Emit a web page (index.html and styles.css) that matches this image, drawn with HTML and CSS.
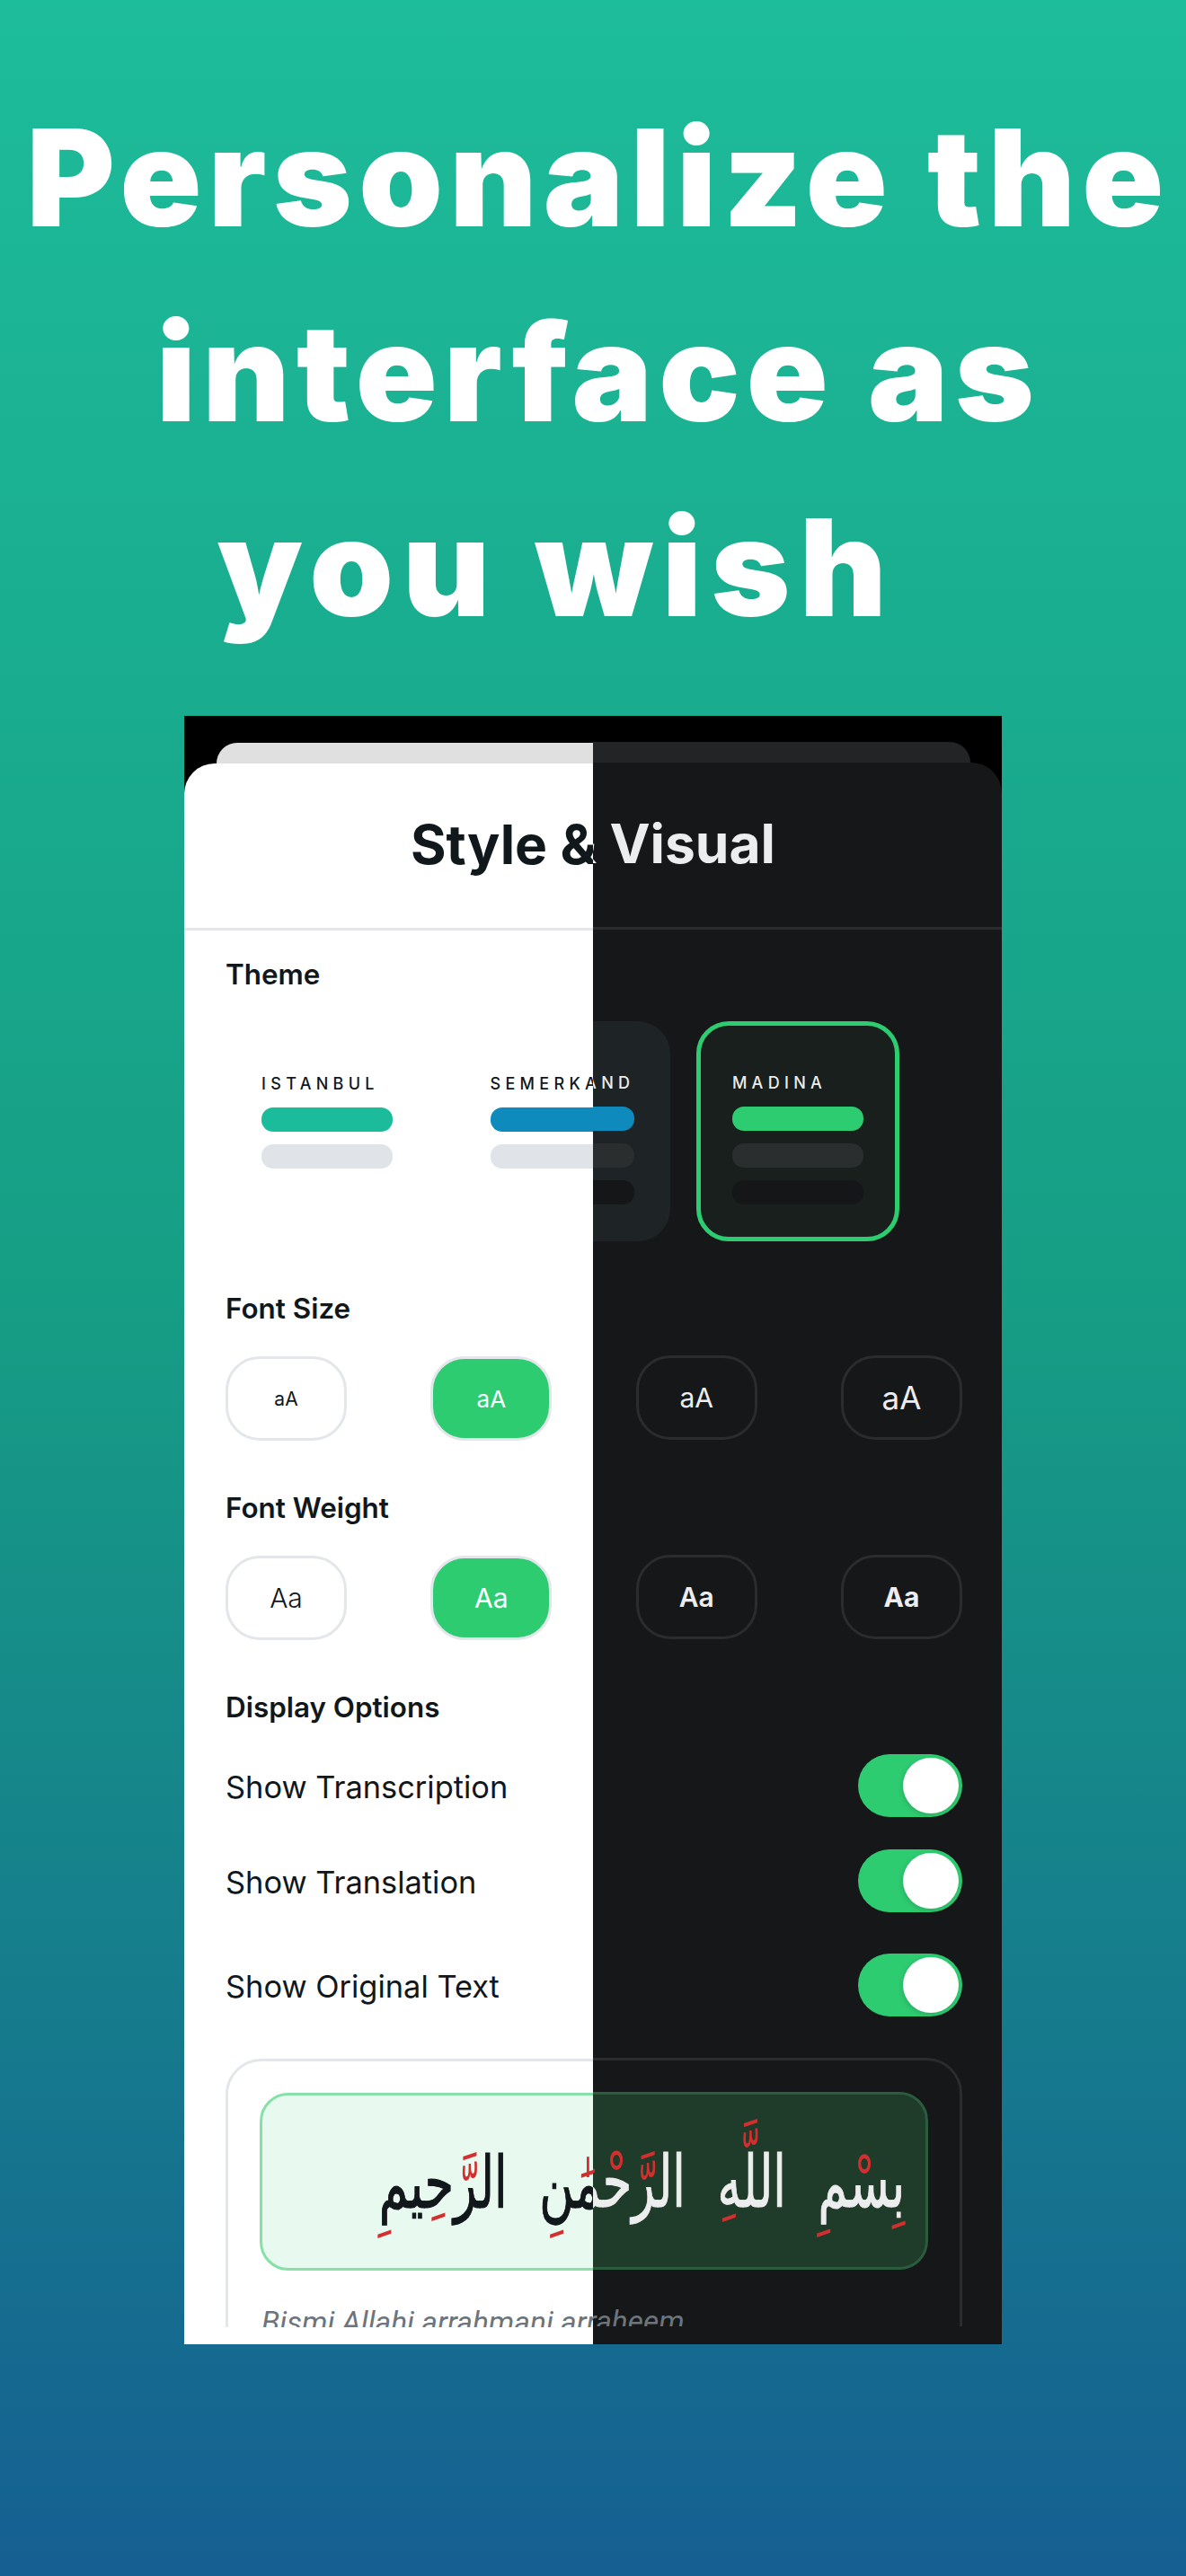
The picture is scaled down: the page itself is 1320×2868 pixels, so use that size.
FILE: index.html
```html
<!DOCTYPE html>
<html lang="en">
<head>
    <meta charset="UTF-8">
    <meta name="viewport" content="width=device-width, initial-scale=1.0">
    <title>Style &amp; Visual</title>
    <link rel="stylesheet" href="styles.css">
</head>
<body>
    <h1 class="headline">Personalize the<br>interface as<br><span class="headline-last">you wish&nbsp;&nbsp;</span></h1>

    <div class="shot">
        <div class="screen light">
            <div class="back-card"></div>
            <div class="sheet">
                <div class="sheet-header"><h2>Style &amp; Visual</h2></div>
                <div class="sheet-body">
                    <h3>Theme</h3>
                    <div class="themes">
                        <div class="theme">
                            <span class="theme-name">ISTANBUL</span>
                            <span class="bar teal"></span><span class="bar soft"></span><span class="bar deep"></span>
                        </div>
                        <div class="theme">
                            <span class="theme-name">SEMERKAND</span>
                            <span class="bar blue"></span><span class="bar soft"></span><span class="bar deep"></span>
                        </div>
                        <div class="theme active">
                            <span class="theme-name">MADINA</span>
                            <span class="bar green"></span><span class="bar soft"></span><span class="bar deep"></span>
                        </div>
                    </div>
                    <h3>Font Size</h3>
                    <div class="choices">
                        <div class="choice size-s">aA</div>
                        <div class="choice size-m selected">aA</div>
                        <div class="choice size-l">aA</div>
                        <div class="choice size-xl">aA</div>
                    </div>
                    <h3>Font Weight</h3>
                    <div class="choices">
                        <div class="choice weight-light">Aa</div>
                        <div class="choice weight-regular selected">Aa</div>
                        <div class="choice weight-semi">Aa</div>
                        <div class="choice weight-bold">Aa</div>
                    </div>
                    <h3>Display Options</h3>
                    <div class="option"><span>Show Transcription</span><div class="toggle"></div></div>
                    <div class="option"><span>Show Translation</span><div class="toggle"></div></div>
                    <div class="option last"><span>Show Original Text</span><div class="toggle"></div></div>
                    <div class="preview">
                        <div class="arabic-box">
                            <!-- vowelled line in red, bare letters on top of it -->
                            <p class="arabic vowels" dir="rtl" lang="ar">بِسْمِ اللَّهِ الرَّحْمَٰنِ الرَّحِيمِ</p>
                            <p class="arabic letters" dir="rtl" lang="ar">بسم الله الرحمن الرحيم</p>
                        </div>
                        <p class="transcription">Bismi Allahi arrahmani arraheem</p>
                    </div>
                </div>
            </div>
        </div>

        <div class="screen dark">
            <div class="back-card"></div>
            <div class="sheet">
                <div class="sheet-header"><h2>Style &amp; Visual</h2></div>
                <div class="sheet-body">
                    <h3>Theme</h3>
                    <div class="themes">
                        <div class="theme">
                            <span class="theme-name">ISTANBUL</span>
                            <span class="bar teal"></span><span class="bar soft"></span><span class="bar deep"></span>
                        </div>
                        <div class="theme">
                            <span class="theme-name">SEMERKAND</span>
                            <span class="bar blue"></span><span class="bar soft"></span><span class="bar deep"></span>
                        </div>
                        <div class="theme active">
                            <span class="theme-name">MADINA</span>
                            <span class="bar green"></span><span class="bar soft"></span><span class="bar deep"></span>
                        </div>
                    </div>
                    <h3>Font Size</h3>
                    <div class="choices">
                        <div class="choice size-s">aA</div>
                        <div class="choice size-m selected">aA</div>
                        <div class="choice size-l">aA</div>
                        <div class="choice size-xl">aA</div>
                    </div>
                    <h3>Font Weight</h3>
                    <div class="choices">
                        <div class="choice weight-light">Aa</div>
                        <div class="choice weight-regular selected">Aa</div>
                        <div class="choice weight-semi">Aa</div>
                        <div class="choice weight-bold">Aa</div>
                    </div>
                    <h3>Display Options</h3>
                    <div class="option"><span>Show Transcription</span><div class="toggle"></div></div>
                    <div class="option"><span>Show Translation</span><div class="toggle"></div></div>
                    <div class="option last"><span>Show Original Text</span><div class="toggle"></div></div>
                    <div class="preview">
                        <div class="arabic-box">
                            <p class="arabic vowels" dir="rtl" lang="ar">بِسْمِ اللَّهِ الرَّحْمَٰنِ الرَّحِيمِ</p>
                            <p class="arabic letters" dir="rtl" lang="ar">بسم الله الرحمن الرحيم</p>
                        </div>
                        <p class="transcription">Bismi Allahi arrahmani arraheem</p>
                    </div>
                </div>
            </div>
        </div>
    </div>
</body>
</html>
```

FILE: styles.css
```css
* {
    box-sizing: border-box;
}
body {
    margin: 0;
    width: 1320px;
    height: 2868px;
    overflow: hidden;
    font-family: Inter, "Noto Sans", sans-serif;
    background: linear-gradient(180deg, #1dbc9a 0%, #169e85 50%, #155f92 100%);
}
.headline {
    margin: 0;
    height: 797px;
    padding: 89px 0 0 12px;
    font-size: 150px;
    font-weight: 900;
    line-height: 217px;
    letter-spacing: 7.2px;
    text-align: center;
    color: #fff;
}
.headline-last {
    padding-right: 14px;
    letter-spacing: 10px;
}
.shot {
    position: relative;
    width: 910px;
    height: 1813px;
    margin-left: 205px;
}
.screen {
    position: absolute;
    top: 0;
    left: 0;
    width: 910px;
    height: 1813px;
    overflow: hidden;
    background: #000;
}
.light {
    --bg: #fff;
    --text: #11181c;
    --line: #e3e6ea;
    --back: #e0e0e0;
    --soft: #e0e3e8;
    --deep: #fff;
    --theme-bg: #fff;
    --active-bg: #e8f9f0;
    --box-bg: #e8f9f0;
    --box-line: #86e0a8;
    padding-top: 30px;
}
.dark {
    --bg: #151718;
    --text: #ecedee;
    --line: #2a2c2e;
    --back: #222426;
    --soft: #2a2e2f;
    --deep: #141617;
    --theme-bg: #1e2325;
    --active-bg: #181f1c;
    --box-bg: #1f3b2a;
    --box-line: #2a5c3e;
    padding-top: 29px;
    clip-path: inset(0 0 0 455px);
}
.back-card {
    height: 23px;
    margin: 0 35px 0 36px;
    border-radius: 30px 30px 0 0;
    background: var(--back);
}
.sheet {
    height: 1800px;
    border-radius: 34px 34px 0 0;
    background: var(--bg);
    color: var(--text);
}
.sheet-header {
    display: flex;
    align-items: center;
    justify-content: center;
    height: 186px;
    padding-bottom: 4px;
    border-bottom: 3px solid var(--line);
}
.sheet-header h2 {
    margin: 0;
    font-size: 60.5px;
    font-weight: 700;
}
.sheet-body {
    height: 1555px;
    padding: 0 44px 0 46px;
    overflow: hidden;
}
h3 {
    margin: 55px 0 33px;
    font-size: 31.4px;
    font-weight: 600;
    line-height: 40px;
}
.sheet-body h3:first-child {
    margin-top: 29px;
}
.themes {
    display: flex;
    gap: 28.5px;
    margin-bottom: -1px;
}
.theme {
    display: flex;
    flex-direction: column;
    gap: 14px;
    height: 245px;
    padding: 50px 35px 0;
    border: 5px solid transparent;
    border-radius: 36px;
    background: var(--theme-bg);
}
.theme.active {
    border-color: #2ecc71;
    background: var(--active-bg);
}
.theme-name {
    margin-bottom: -2px;
    font-size: 18px;
    font-weight: 500;
    line-height: 28px;
    letter-spacing: 5.3px;
}
.bar {
    display: block;
    width: 100%;
    min-width: 146px;
    height: 27px;
    border-radius: 13px;
}
.teal { background: #1abc9c; }
.blue { background: #0f8abd; }
.green { background: #2ecc71; }
.soft { background: var(--soft); }
.deep { background: var(--deep); }
.choices {
    display: flex;
    justify-content: space-between;
}
.choice {
    display: flex;
    align-items: center;
    justify-content: center;
    width: 135px;
    height: 94px;
    border: 3px solid var(--line);
    border-radius: 38px;
    font-size: 30px;
}
.choice.selected {
    background: #2ecc71;
    color: #fff;
}
.size-s { font-size: 21px; }
.size-m { font-size: 26px; }
.size-l { font-size: 30px; }
.size-xl { font-size: 35px; }
.weight-light { font-weight: 300; }
.weight-regular { font-weight: 400; }
.weight-semi { font-weight: 600; }
.weight-bold { font-weight: 700; }
.option {
    display: flex;
    align-items: center;
    justify-content: space-between;
    height: 70px;
    margin-bottom: 36px;
    font-size: 34.4px;
}
.option.last {
    margin-top: 46px;
    margin-bottom: 46px;
}
.toggle {
    position: relative;
    width: 116px;
    height: 70px;
    border-radius: 35px;
    background: #2ecc71;
}
.toggle::after {
    content: "";
    position: absolute;
    top: 4px;
    right: 4px;
    width: 62px;
    height: 62px;
    border-radius: 50%;
    background: #fff;
    box-shadow: -1px 2px 6px rgba(0, 0, 0, 0.15);
}
.preview {
    height: 400px;
    padding: 35px;
    border: 3px solid var(--line);
    border-radius: 40px;
}
.arabic-box {
    position: relative;
    height: 198px;
    overflow: hidden;
    border: 3px solid var(--box-line);
    border-radius: 32px;
    background: var(--box-bg);
}
.arabic {
    position: absolute;
    top: 0;
    right: 23px;
    margin: 0;
    font-family: "DejaVu Sans", sans-serif;
    font-size: 80px;
    line-height: 195px;
    word-spacing: 29px;
    white-space: nowrap;
    transform: scaleX(0.657);
    transform-origin: right center;
}
.vowels {
    color: #d32f2f;
}
.letters {
    -webkit-text-stroke: 1px currentColor;
}
.transcription {
    margin: 38px 0 0 2px;
    font-family: Roboto, sans-serif;
    font-size: 33.5px;
    font-style: italic;
    color: #6c757d;
}
```
